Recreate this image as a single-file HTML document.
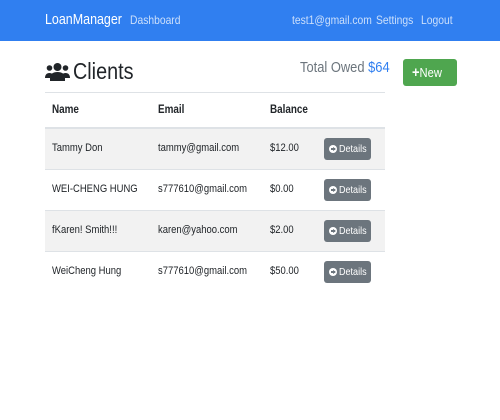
<!DOCTYPE html>
<html><head><style>
*{margin:0;padding:0;box-sizing:border-box}
body{width:500px;height:420px;background:#fff;font-family:"Liberation Sans",sans-serif;color:#212529;position:relative;overflow:hidden}
.nav{position:absolute;left:0;top:0;width:500px;height:41px;background:#307ff0}
.t{position:absolute;white-space:nowrap;transform:scaleX(.86);transform-origin:0 0}
.nv{top:13px;font-size:12px;color:rgba(255,255,255,.75)}
.r{position:absolute;left:45px;width:340px;border-top:1px solid #dee2e6}
.s{background:#f2f2f2}
.c{font-size:11px}
.btn{position:absolute;left:324px;width:47px;height:22px;background:#6c757d;border-radius:3px}
.btn .t{left:15px;top:5px;font-size:10.5px;color:#fff}
.btn i{position:absolute;left:5px;top:7px;width:8px;height:8px;border-radius:50%;background:#fff}
.btn i:after{content:"";position:absolute;left:1.5px;top:3px;width:4px;height:2px;background:#6c757d}
.btn i:before{content:"";position:absolute;left:3.5px;top:1.5px;border-left:3px solid #6c757d;border-top:2.5px solid transparent;border-bottom:2.5px solid transparent}
</style></head><body>
<div class="nav">
<div class="t" style="left:45px;top:12px;font-size:14.5px;color:#fff">LoanManager</div>
<div class="t nv" style="left:130px">Dashboard</div>
<div class="t nv" style="left:292px">test1@gmail.com</div>
<div class="t nv" style="left:376px">Settings</div>
<div class="t nv" style="left:421px">Logout</div>
</div>
<svg style="position:absolute;left:45px;top:62px" width="25" height="20" viewBox="0 0 25 20" fill="#212529">
<circle cx="12.5" cy="5" r="4"/><circle cx="4.5" cy="6" r="2.8"/><circle cx="20.5" cy="6" r="2.8"/>
<path d="M5 19v-3c0-4 3-6 7.5-6s7.5 2 7.5 6v3z"/><path d="M0 16c0-3 1.5-5 4.5-5 1.5 0 2.3.5 3 1-1.5 1.3-2.3 2.5-2.3 4z"/><path d="M25 16c0-3-1.5-5-4.5-5-1.5 0-2.3.5-3 1 1.5 1.3 2.3 2.5 2.3 4z"/>
</svg>
<div class="t" style="left:73px;top:58px;font-size:23px">Clients</div>
<div class="t" style="left:300px;top:59px;font-size:15px;color:#6c757d">Total Owed <span style="color:#307ff0">$64</span></div>
<div style="position:absolute;left:403px;top:59px;width:54px;height:27px;background:#4fa64f;border-radius:3px"><div class="t" style="left:9px;top:5px;font-size:13px;color:#fff"><b style="font-size:15px">+</b>New</div></div>

<div class="r" style="top:92px;height:37px;border-bottom:2px solid #dee2e6"></div>
<div class="t c" style="left:52px;top:104px;font-weight:bold;font-size:11.5px">Name</div>
<div class="t c" style="left:158px;top:104px;font-weight:bold;font-size:11.5px">Email</div>
<div class="t c" style="left:270px;top:104px;font-weight:bold;font-size:11.5px">Balance</div>

<div class="r s" style="top:128px;height:41px"></div>
<div class="r" style="top:169px;height:41px"></div>
<div class="r s" style="top:210px;height:41px"></div>
<div class="r" style="top:251px;height:41px"></div>

<div class="t c" style="left:52px;top:142px">Tammy Don</div><div class="t c" style="left:158px;top:142px">tammy@gmail.com</div><div class="t c" style="left:270px;top:142px">$12.00</div>
<div class="btn" style="top:138px"><i></i><div class="t">Details</div></div>
<div class="t c" style="left:52px;top:183px">WEI-CHENG HUNG</div><div class="t c" style="left:158px;top:183px">s777610@gmail.com</div><div class="t c" style="left:270px;top:183px">$0.00</div>
<div class="btn" style="top:179px"><i></i><div class="t">Details</div></div>
<div class="t c" style="left:52px;top:224px">fKaren! Smith!!!</div><div class="t c" style="left:158px;top:224px">karen@yahoo.com</div><div class="t c" style="left:270px;top:224px">$2.00</div>
<div class="btn" style="top:220px"><i></i><div class="t">Details</div></div>
<div class="t c" style="left:52px;top:265px">WeiCheng Hung</div><div class="t c" style="left:158px;top:265px">s777610@gmail.com</div><div class="t c" style="left:270px;top:265px">$50.00</div>
<div class="btn" style="top:261px"><i></i><div class="t">Details</div></div>
</body></html>
